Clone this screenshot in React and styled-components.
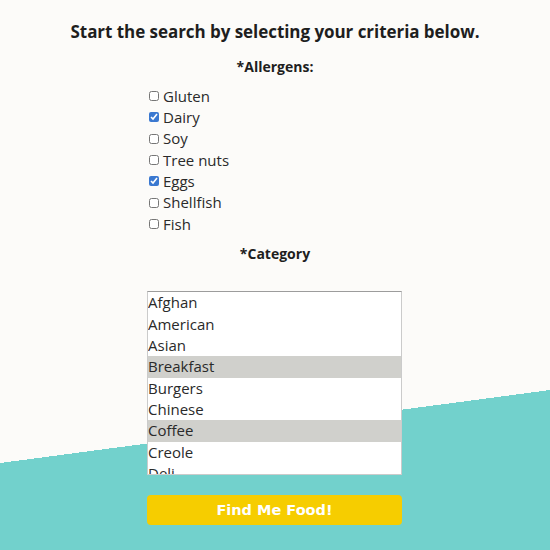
import React from "react";
import styled, { createGlobalStyle } from "styled-components";

const Global = createGlobalStyle`
  html, body { margin: 0; padding: 0; }
  body { font-family: "Open Sans", "Liberation Sans", sans-serif; color: #222; }
`;

const Page = styled.div`
  width: 100%;
  min-height: 550px;
  box-sizing: border-box;
  padding-top: 20px;
  display: flex;
  flex-direction: column;
  align-items: center;
  background: linear-gradient(172.44deg, #fcfbf9 459px, #72d1cc 459px);
`;

const Title = styled.h1`
  margin: 0;
  font-size: 17px;
  line-height: 24px;
  font-weight: 700;
  letter-spacing: -0.05px;
  color: #1e1e1e;
`;

const Label = styled.h2`
  margin: ${(p) => p.$mt}px 0 0;
  font-size: 14px;
  line-height: 20px;
  font-weight: 700;
  color: #1e1e1e;
`;

const Column = styled.form`
  width: 254px;
  display: flex;
  flex-direction: column;
  align-items: center;
`;

const CheckList = styled.div`
  margin-top: 8px;
  align-self: stretch;
  display: flex;
  flex-direction: column;
`;

const CheckRow = styled.label`
  display: flex;
  align-items: center;
  gap: 4px;
  height: 21.33px;
  font-size: 15px;
  color: #2a2a2a;
`;

const Box = styled.input`
  width: 10px;
  height: 10px;
  margin: 1px 0 0 1px;
  accent-color: #3a78d0;
`;

const List = styled.div`
  margin-top: 27px;
  margin-left: -1px;
  align-self: stretch;
  height: 182px;
  overflow: hidden;
  background: #fff;
  border: 1px solid #cbcbcb;
  border-top-color: #9c9c9c;
`;

const Option = styled.div`
  height: 21.33px;
  line-height: 21.33px;
  padding-left: 0;
  font-size: 15px;
  color: #2a2a2a;
  background: ${(p) => (p.$selected ? "#d0d0cc" : "transparent")};
`;

const Button = styled.button`
  margin-top: 20px;
  margin-left: -1px;
  align-self: stretch;
  height: 30px;
  border: none;
  border-radius: 4px;
  background: #f6cd00;
  color: #fff;
  font-family: "DejaVu Sans", sans-serif;
  font-weight: 700;
  font-size: 14.5px;
  letter-spacing: 0;
  cursor: pointer;
`;

const allergens = [
  ["Gluten", false],
  ["Dairy", true],
  ["Soy", false],
  ["Tree nuts", false],
  ["Eggs", true],
  ["Shellfish", false],
  ["Fish", false],
];

const categories = [
  ["Afghan", false],
  ["American", false],
  ["Asian", false],
  ["Breakfast", true],
  ["Burgers", false],
  ["Chinese", false],
  ["Coffee", true],
  ["Creole", false],
  ["Deli", false],
  ["Diner", false],
];

export default function App() {
  return (
    <>
      <Global />
      <Page>
        <Title>Start the search by selecting your criteria below.</Title>
        <Column onSubmit={(e) => e.preventDefault()}>
          <Label $mt={13}>*Allergens:</Label>
          <CheckList>
            {allergens.map(([name, checked]) => (
              <CheckRow key={name}>
                <Box type="checkbox" defaultChecked={checked} />
                {name}
              </CheckRow>
            ))}
          </CheckList>
          <Label $mt={10}>*Category</Label>
          <List role="listbox" aria-multiselectable="true">
            {categories.map(([name, sel]) => (
              <Option key={name} role="option" aria-selected={sel} $selected={sel}>
                {name}
              </Option>
            ))}
          </List>
          <Button type="submit">Find Me Food!</Button>
        </Column>
      </Page>
    </>
  );
}
